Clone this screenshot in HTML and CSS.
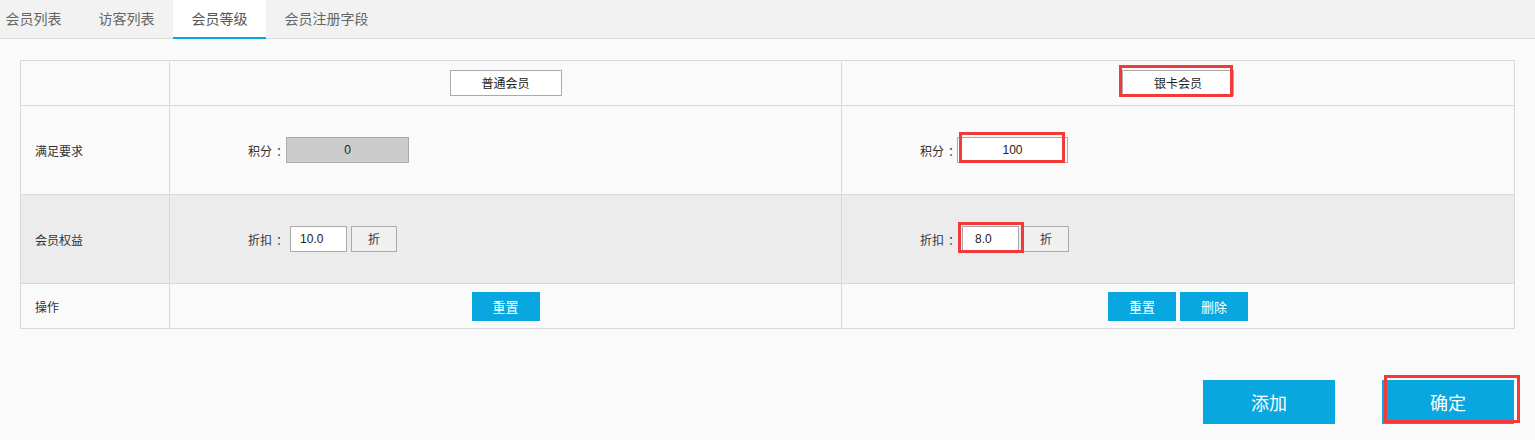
FILE: index.html
```html
<!DOCTYPE html>
<html lang="zh">
<head>
<meta charset="utf-8">
<title>会员等级</title>
<link rel="stylesheet" href="styles.css">
</head>
<body>
<div class="tabs">
  <div class="tab">会员列表</div>
  <div class="tab">访客列表</div>
  <div class="tab active">会员等级</div>
  <div class="tab">会员注册字段</div>
</div>
<div class="content">
  <table class="grade">
    <colgroup>
      <col class="c1"><col class="c2"><col class="c3">
    </colgroup>
    <tr class="r-head">
      <td></td>
      <td class="center"><span class="name-btn">普通会员</span></td>
      <td class="center"><span class="marked"><span class="name-btn">银卡会员</span><span class="mark mark-name"></span></span></td>
    </tr>
    <tr class="r-tall">
      <td class="label">满足要求</td>
      <td><div class="field"><span class="flabel">积分<span class="colon">：</span></span><span class="inp inp-dis">0</span></div></td>
      <td><div class="field"><span class="flabel">积分<span class="colon">：</span></span><span class="marked m-pts"><span class="inp inp-pts">100</span><span class="mark mark-pts"></span></span></div></td>
    </tr>
    <tr class="r-tall r-gray">
      <td class="label">会员权益</td>
      <td><div class="field"><span class="flabel">折扣<span class="colon">：</span></span><span class="inp inp-disc">10.0</span><span class="unit">折</span></div></td>
      <td><div class="field"><span class="flabel">折扣<span class="colon">：</span></span><span class="marked m-disc"><span class="inp inp-disc inp-disc2">8.0</span><span class="mark mark-disc"></span></span><span class="unit">折</span></div></td>
    </tr>
    <tr class="r-head">
      <td class="label">操作</td>
      <td class="center"><span class="blue-btn">重置</span></td>
      <td class="center"><span class="blue-btn">重置</span><span class="blue-btn">删除</span></td>
    </tr>
  </table>
  <div class="actions">
    <span class="big-btn">添加</span>
    <span class="marked"><span class="big-btn">确定</span><span class="mark mark-ok"></span></span>
  </div>
</div>
</body>
</html>
```

FILE: styles.css
```css
* { box-sizing: border-box; }
html, body {
  margin: 0;
  padding: 0;
  background: #fafafa;
  font-family: "Microsoft YaHei", "Noto Sans CJK SC", "Liberation Sans", sans-serif;
  color: #333;
  overflow: hidden;
}
.tabs {
  display: flex;
  height: 39px;
  background: #f2f2f2;
  border-bottom: 1px solid #dcdcdc;
  margin-left: -13px;
}
.tab {
  height: 38px;
  line-height: 36px;
  padding: 0 18.5px;
  font-size: 14px;
  color: #666;
}
.tab.active {
  background: #fff;
  color: #555;
  border-bottom: 2px solid #09a7e0;
  height: 39px;
  margin-bottom: -1px;
  line-height: 36px;
}
.content {
  padding: 21px 21px 0 20px;
}
.grade {
  width: 1494px;
  border-collapse: collapse;
  table-layout: fixed;
  font-size: 12px;
}
.c1 { width: 149px; }
.c2 { width: 672px; }
.c3 { width: 673px; }
.grade td {
  border: 1px solid #d9d9d9;
  padding: 0;
  vertical-align: middle;
}
.r-head td { height: 45px; }
.r-tall td { height: 89px; }
.r-gray td { background: #ececec; }
.center { text-align: center; }
.label { padding-left: 14px !important; color: #333; }
.marked {
  position: relative;
  display: inline-flex;
}
.mark {
  position: absolute;
  border: 3px solid #f23a3a;
  pointer-events: none;
}
.name-btn {
  display: inline-block;
  width: 112px;
  height: 26px;
  line-height: 24px;
  border: 1px solid #aaa;
  background: #fff;
  color: #222;
  text-align: center;
  vertical-align: middle;
}
.mark-name { left: -3px; right: 1px; top: -5px; bottom: -1px; }
.field {
  display: flex;
  align-items: center;
  padding-left: 78px;
}
.flabel { color: #333; }
.colon { display: inline-block; transform: translateX(4px); }
.inp {
  display: inline-block;
  height: 26px;
  line-height: 24px;
  border: 1px solid #aaa;
  background: #fff;
  color: #222;
  font-family: "Liberation Sans", "Noto Sans CJK SC", sans-serif;
}
.inp-dis {
  width: 123px;
  background: #ccc;
  text-align: center;
  margin-left: 2px;
}
.m-pts { margin-left: 1px; }
.inp-pts {
  width: 111px;
  text-align: center;
}
.mark-pts { left: 2px; right: 3px; top: -5px; bottom: 0; }
.inp-disc {
  width: 57px;
  padding-left: 9px;
  margin-left: 6px;
}
.m-disc { margin-left: 6px; }
.inp-disc2 { padding-left: 12px; margin-left: 0; }
.mark-disc { left: -4px; right: -5px; top: -4px; bottom: -1px; }
.unit {
  display: inline-block;
  width: 46px;
  height: 26px;
  line-height: 24px;
  border: 1px solid #aaa;
  background: #f0f0f0;
  text-align: center;
  margin-left: 4px;
  color: #333;
}
.blue-btn {
  display: inline-block;
  width: 68px;
  height: 29px;
  line-height: 29px;
  background: #09a7e0;
  color: #fff;
  text-align: center;
  font-size: 13px;
  vertical-align: middle;
}
.blue-btn + .blue-btn { margin-left: 4px; }
.actions {
  display: flex;
  justify-content: flex-end;
  gap: 47px;
  margin-top: 51px;
}
.big-btn {
  display: inline-block;
  width: 132px;
  height: 44px;
  line-height: 44px;
  background: #09a7e0;
  color: #fff;
  text-align: center;
  font-size: 18px;
}
.mark-ok { left: 2px; right: -6px; top: -5px; bottom: 1px; }
```
